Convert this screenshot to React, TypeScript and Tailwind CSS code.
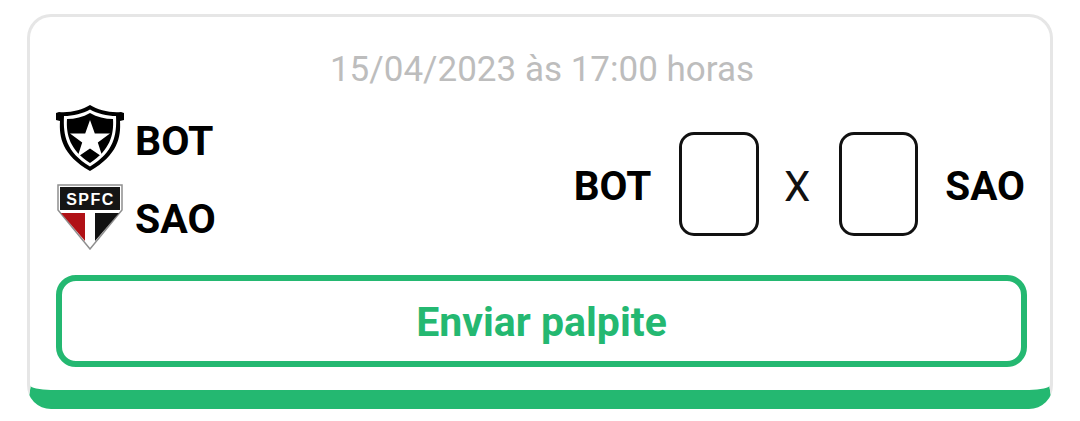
export default function App() {
  return (
    <div className="w-[1080px] h-[421px] bg-white pt-[14px] pl-[27px] font-['Roboto',sans-serif] overflow-hidden">
      <div className="w-[1026px] h-[395px] rounded-[24px] border-[3px] border-b-[19px] border-[#e6e6e6] border-b-[#24b871] pt-[31px] px-[26px] flex flex-col">
        <div className="text-center text-[35px] leading-[44px] text-[#bdbdbd] h-[44px] pl-[4px]">15/04/2023 às 17:00 horas</div>
        <div className="flex justify-between items-start mt-[13px] h-[146px]">
          <div className="flex flex-col gap-[13px]">
            <div className="flex items-center gap-[11px] h-[66px]">
              <svg width="68" height="66" viewBox="0 0 68 66">
                <path d="M34 0C26 5 14 8 3 7L0 8V15L4 16C3 32 6 50 34 66C62 50 65 32 64 16L68 15V8L65 7C54 8 42 5 34 0Z" fill="#000" />
                <path d="M34 4.500C27 8.500 17 11 8 11C7 30 10 47 34 61.500C58 47 61 30 60 11C51 11 41 8.500 34 4.500Z" fill="#fff" />
                <path d="M34 8C27 12 19 14 11 14C10 30 14 45 34 58C54 45 58 30 57 14C49 14 41 12 34 8Z" fill="#000" />
                <path d="M34 15L38.800 28.500L54 28.500L41.800 37.500L46.500 52L34 43.500L21.500 52L26.200 37.500L14 28.500L29.200 28.500Z" fill="#fff" />
              </svg>
              <span className="pt-[6px] text-[41px] leading-none font-bold text-black">BOT</span>
            </div>
            <div className="flex items-center gap-[11px] h-[66px]">
              <svg width="68" height="66" viewBox="0 0 68 66">
                <path d="M2 1H66V26L34 65L2 26Z" fill="#fff" stroke="#8f8f8f" strokeWidth="1.500" />
                <rect x="4" y="3" width="60" height="23" fill="#151515" />
                <path d="M5 29H29V57Z" fill="#b01116" />
                <path d="M39 29H63L39 57Z" fill="#111" />
                <text x="34.500" y="21" textAnchor="middle" fontFamily="Liberation Sans, sans-serif" fontWeight="700" fontSize="16" letterSpacing="1.500" fill="#fff">SPFC</text>
              </svg>
              <span className="pt-[4px] text-[41px] leading-none font-bold text-black">SAO</span>
            </div>
          </div>
          <div className="flex items-center mt-[27px] mr-[-1px]">
            <span className="pt-[4px] text-[40.500px] leading-none font-bold text-black">BOT</span>
            <div className="w-[80px] h-[104px] rounded-[15px] border-[3px] border-[#111] ml-[28px]" />
            <span className="w-[80px] pr-[4px] pt-[5px] text-center text-[42px] leading-none text-[#111]">X</span>
            <div className="w-[79px] h-[104px] rounded-[15px] border-[3px] border-[#111]" />
            <span className="pt-[4px] text-[40.500px] leading-none font-bold text-black ml-[27px]">SAO</span>
          </div>
        </div>
        <button className="mt-[24px] w-[971px] h-[92px] rounded-[20px] border-[6px] border-[#24b871] bg-white text-[#24b871] text-[41px] font-bold pt-[3px]">Enviar palpite</button>
      </div>
    </div>
  );
}
